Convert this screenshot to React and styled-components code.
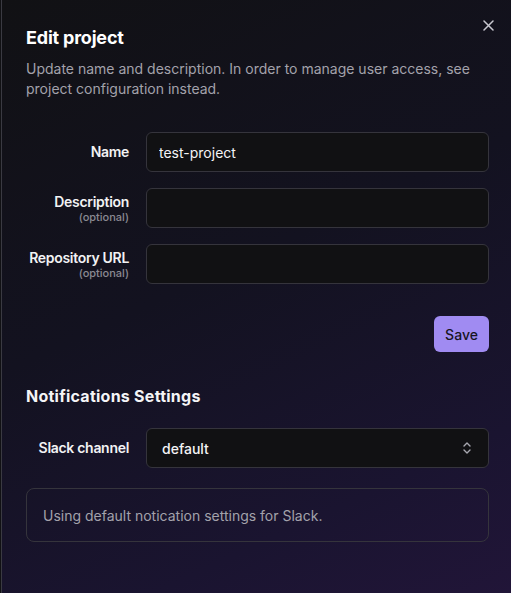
import React from "react";
import styled, { createGlobalStyle } from "styled-components";

const GlobalStyle = createGlobalStyle`
  html, body {
    margin: 0;
    padding: 0;
    background: #111114;
  }
  body {
    font-family: Inter, "Noto Sans", sans-serif;
  }
`;

const App = () => {
  return (
    <>
      <GlobalStyle />
      <Panel>
        <CloseButton aria-label="Close">
          <svg width="11" height="11" viewBox="0 0 11 11">
            <path d="M1 1L10 10M10 1L1 10" stroke="#c8c8d0" strokeWidth="1.5" strokeLinecap="round" />
          </svg>
        </CloseButton>
        <Title>Edit project</Title>
        <Lead>
          Update name and description. In order to manage user access, see
          project configuration instead.
        </Lead>

        <Form>
          <Row>
            <Label>Name</Label>
            <Input defaultValue="test-project" />
          </Row>
          <Row>
            <Label>
              Description
              <Optional>(optional)</Optional>
            </Label>
            <Input />
          </Row>
          <Row>
            <Label>
              Repository URL
              <Optional>(optional)</Optional>
            </Label>
            <Input />
          </Row>
          <Actions>
            <SaveButton>Save</SaveButton>
          </Actions>
        </Form>

        <Heading>Notifications Settings</Heading>
        <Row>
          <Label>Slack channel</Label>
          <Select>
            <span>default</span>
            <svg width="10" height="16" viewBox="0 0 10 16">
              <path d="M2 6L5 3L8 6M2 10L5 13L8 10" fill="none" stroke="#a8a8b0" strokeWidth="1.4" strokeLinecap="round" strokeLinejoin="round" />
            </svg>
          </Select>
        </Row>
        <InfoBox>Using default notication settings for Slack.</InfoBox>
      </Panel>
    </>
  );
};

const Panel = styled.div`
  position: relative;
  box-sizing: border-box;
  width: 510px;
  height: 593px;
  margin-left: 1px;
  padding: 26px 21px 0 24px;
  border-left: 1px solid #3a3a42;
  background: linear-gradient(155deg, #111114 0%, #131220 45%, #1a1430 80%, #211538 100%);
  color: #f4f4f6;
  display: flex;
  flex-direction: column;
`;

const CloseButton = styled.button`
  position: absolute;
  top: 18px;
  right: 16px;
  width: 14px;
  height: 14px;
  padding: 0;
  border: 0;
  background: transparent;
  display: flex;
  align-items: center;
  justify-content: center;
`;

const Title = styled.h2`
  margin: 0;
  font-size: 18px;
  line-height: 24px;
  font-weight: 700;
  letter-spacing: -0.2px;
  color: #ffffff;
`;

const Lead = styled.p`
  margin: 9px 0 0;
  font-size: 14px;
  line-height: 20px;
  color: #a3a2ab;
  max-width: 450px;
`;

const Form = styled.div`
  margin-top: 33px;
  display: flex;
  flex-direction: column;
  gap: 16px;
`;

const Row = styled.div`
  display: grid;
  grid-template-columns: 103px 1fr;
  column-gap: 17px;
  align-items: center;
`;

const Label = styled.label`
  white-space: nowrap;
  text-align: right;
  font-size: 14px;
  line-height: 18px;
  font-weight: 600;
  letter-spacing: -0.3px;
  color: #f2f2f4;
  display: flex;
  flex-direction: column;
  align-items: flex-end;
`;

const Optional = styled.span`
  font-size: 11px;
  line-height: 12px;
  font-weight: 500;
  letter-spacing: 0;
  color: #8a8992;
`;

const Input = styled.input`
  box-sizing: border-box;
  height: 40px;
  width: 343px;
  padding: 0 12px;
  border-radius: 6px;
  border: 1px solid #35343c;
  background: #111113;
  color: #f4f4f6;
  font-family: inherit;
  font-size: 14px;
  outline: none;
`;

const Actions = styled.div`
  display: flex;
  justify-content: flex-end;
  margin-top: 16px;
  width: 463px;
`;

const SaveButton = styled.button`
  height: 36px;
  width: 55px;
  padding: 0;
  border: 0;
  border-radius: 6px;
  background: #a08bf2;
  color: #18151f;
  font-family: inherit;
  font-size: 14px;
  font-weight: 500;
`;

const Heading = styled.h3`
  margin: 33px 0 21px;
  font-size: 16px;
  line-height: 22px;
  font-weight: 700;
  letter-spacing: 0.25px;
  color: #f4f4f6;
`;

const Select = styled.div`
  box-sizing: border-box;
  height: 40px;
  width: 343px;
  padding: 0 16px 0 15px;
  border-radius: 6px;
  border: 1px solid #35343c;
  background: #111113;
  color: #f4f4f6;
  font-size: 14px;
  font-weight: 500;
  display: flex;
  align-items: center;
  justify-content: space-between;
`;

const InfoBox = styled.div`
  box-sizing: border-box;
  margin-top: 20px;
  width: 463px;
  height: 54px;
  padding: 0 16px;
  border: 1px solid #35343c;
  border-radius: 8px;
  display: flex;
  align-items: center;
  font-size: 14px;
  color: #a3a2ab;
`;

export default App;
